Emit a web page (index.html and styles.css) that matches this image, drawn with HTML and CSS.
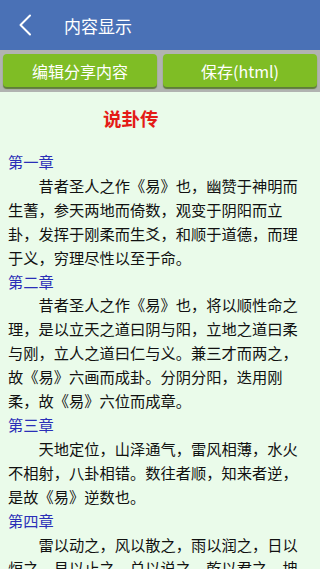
FILE: index.html
```html
<!DOCTYPE html>
<html lang="zh">
<head>
  <meta charset="UTF-8">
  <meta name="viewport" content="width=device-width, initial-scale=1.0">
  <title>内容显示</title>
  <link rel="stylesheet" href="styles.css">
</head>
<body>
  <header class="topbar">
    <button class="back-btn" aria-label="返回">
      <svg width="14" height="22" viewBox="0 0 14 22">
        <path d="M12 1.5 L2.5 11 L12 20.5" fill="none" stroke="#ffffff" stroke-width="2" stroke-linecap="round" stroke-linejoin="round"/>
      </svg>
    </button>
    <span class="topbar-title">内容显示</span>
  </header>

  <div class="toolbar">
    <button class="tool-btn">编辑分享内容</button>
    <button class="tool-btn">保存(html)</button>
  </div>

  <main class="content">
    <h1 class="doc-title">说卦传</h1>

    <h2 class="chapter">第一章</h2>
    <p>昔者圣人之作《易》也，幽赞于神明而生蓍，参天两地而倚数，观变于阴阳而立卦，发挥于刚柔而生爻，和顺于道德，而理于义，穷理尽性以至于命。</p>

    <h2 class="chapter">第二章</h2>
    <p>昔者圣人之作《易》也，将以顺性命之理，是以立天之道曰阴与阳，立地之道曰柔与刚，立人之道曰仁与义。兼三才而两之，故《易》六画而成卦。分阴分阳，迭用刚柔，故《易》六位而成章。</p>

    <h2 class="chapter">第三章</h2>
    <p>天地定位，山泽通气，雷风相薄，水火不相射，八卦相错。数往者顺，知来者逆，是故《易》逆数也。</p>

    <h2 class="chapter">第四章</h2>
    <p>雷以动之，风以散之，雨以润之，日以烜之，艮以止之，兑以说之，乾以君之，坤以藏之。</p>
  </main>
</body>
</html>
```

FILE: styles.css
```css
* {
  margin: 0;
  padding: 0;
  box-sizing: border-box;
}

body {
  font-family: "Noto Sans CJK SC", "Noto Sans", sans-serif;
  background: #eafbea;
  color: #111;
  width: 320px;
  height: 569px;
  overflow: hidden;
}

.topbar {
  height: 50px;
  background: #4a71b6;
  display: flex;
  align-items: center;
  padding-left: 18px;
}

.back-btn {
  background: none;
  border: none;
  width: 16px;
  height: 22px;
  display: flex;
  align-items: center;
}

.topbar-title {
  color: #ffffff;
  font-size: 17px;
  margin-left: 30px;
}

.toolbar {
  height: 42px;
  background: #b1b3b1;
  display: flex;
  gap: 6px;
  padding: 4px 3px 4px 3px;
}

.tool-btn {
  flex: 1;
  background: #7fbd25;
  color: #ffffff;
  border: none;
  border-radius: 4px;
  box-shadow: 0 2px 1px #5f7d3a;
  font-family: "Noto Sans CJK SC", "Noto Sans", sans-serif;
  font-size: 16px;
  height: 33px;
}

.content {
  padding: 0 8px;
  font-size: 15.25px;
  line-height: 23.9px;
}

.doc-title {
  color: #e41b17;
  font-size: 18.5px;
  font-weight: bold;
  line-height: 24px;
  margin: 14px 0 20px 0;
  padding-left: 95px;
}

.chapter {
  color: #2a2fb8;
  font-size: 15.25px;
  font-weight: normal;
}

.content p {
  text-indent: 2em;
}
```
